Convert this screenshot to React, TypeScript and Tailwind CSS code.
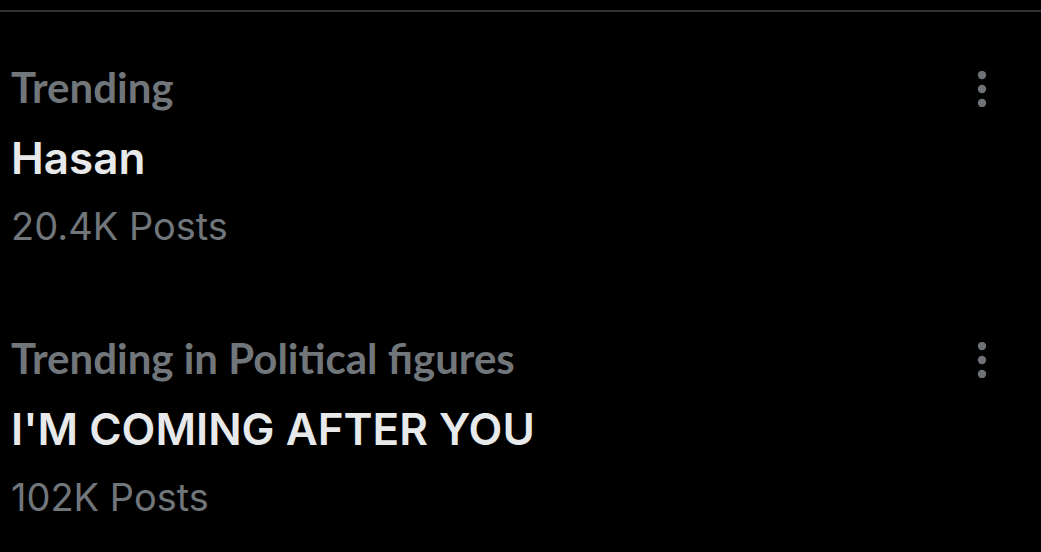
import React from "react";

function Dots() {
  return (
    <svg width="16" height="36" viewBox="0 0 16 36" className="block">
      <circle cx="8" cy="4" r="4.2" fill="#6e7276" />
      <circle cx="8" cy="18" r="4.2" fill="#6e7276" />
      <circle cx="8" cy="32" r="4.2" fill="#6e7276" />
    </svg>
  );
}

function Trend({ cat, title, posts }: { cat: string; title: string; posts: string }) {
  return (
    <div className="flex pl-[11px] pr-[51px]">
      <div className="flex-1 flex flex-col">
        <div
          className="text-[42px] leading-[48px] font-bold text-[#71767b] whitespace-nowrap"
          style={{ fontFamily: "Lato, 'Noto Sans', sans-serif" }}
        >
          {cat}
        </div>
        <div
          className="mt-[19px] text-[44px] leading-[56px] font-semibold text-[#e7e9ea] whitespace-nowrap"
          style={{ fontFamily: "Inter, 'Noto Sans', sans-serif" }}
        >
          {title}
        </div>
        <div
          className="mt-[15px] text-[38px] leading-[50px] font-normal text-[#71767b] whitespace-nowrap"
          style={{ fontFamily: "Inter, 'Noto Sans', sans-serif" }}
        >
          {posts}
        </div>
      </div>
      <div className="pt-[8px]">
        <Dots />
      </div>
    </div>
  );
}

export default function App() {
  return (
    <div className="w-[1041px] h-[552px] bg-black overflow-hidden">
      <div className="pt-[10px]">
        <div className="h-[2px] bg-[#2f3336]" />
      </div>
      <div className="pt-[51px] flex flex-col gap-[83px]">
        <Trend cat="Trending" title="Hasan" posts="20.4K Posts" />
        <Trend cat="Trending in Political figures" title="I'M COMING AFTER YOU" posts="102K Posts" />
      </div>
    </div>
  );
}
